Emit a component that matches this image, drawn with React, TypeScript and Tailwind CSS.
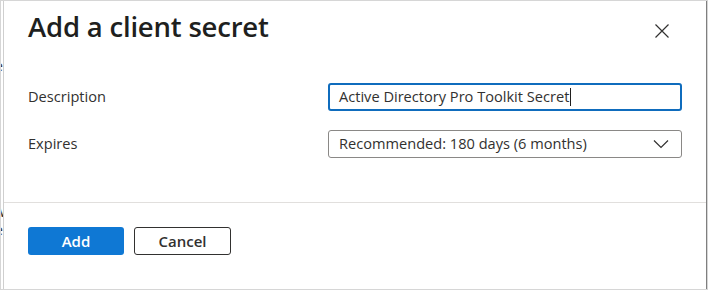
import React from "react";

export default function App() {
  return (
    <div
      className="w-[708px] h-[290px] border border-[#d6d6d6] flex bg-white overflow-hidden"
      style={{ fontFamily: '"Open Sans", "Noto Sans", sans-serif' }}
    >
      <div className="w-[2px] relative overflow-hidden bg-white text-[#323130] text-[14px]">
        <span className="absolute left-[-6px] top-[54px]">e</span>
        <span className="absolute left-[-8px] top-[200px]">W</span>
        <span className="absolute left-[-6px] top-[218px]">e</span>
      </div>
      <div className="flex-1 flex flex-col border-l border-[#cfcfcf] border-r border-r-[#7f7f7f]">
        <div className="flex items-start justify-between pl-[24px] pr-[36px] pt-[6px]">
          <h1 className="text-[27.5px] font-semibold text-[#201f1e] leading-[40px] tracking-[-0.2px]">
            Add a client secret
          </h1>
          <button className="mt-[16px] text-[#323130]" aria-label="Close">
            <svg width="16" height="16" viewBox="0 0 16 16" fill="none" stroke="#323130" strokeWidth="1.2">
              <path d="M1.5 1.5 L14.5 14.5 M14.5 1.5 L1.5 14.5" />
            </svg>
          </button>
        </div>
        <div className="pl-[24px] pr-[24px] mt-[36px] flex flex-col gap-[19px] text-[14.6px] text-[#323130]">
          <div className="flex items-center">
            <label className="w-[300px]">Description</label>
            <div className="w-[354px] h-[28px] border-2 border-[#0f6cbd] rounded-[3px] flex items-center pl-[9px]">
              <span>Active Directory Pro Toolkit Secret</span>
              <span className="w-px h-[18px] bg-[#201f1e] ml-[1px]" />
            </div>
          </div>
          <div className="flex items-center">
            <label className="w-[300px]">Expires</label>
            <div className="w-[354px] h-[28px] border border-[#8a8886] rounded-[3px] flex items-center justify-between pl-[10px] pr-[12px]">
              <span>Recommended: 180 days (6 months)</span>
              <svg width="16" height="10" viewBox="0 0 16 10" fill="none" stroke="#323130" strokeWidth="1.2">
                <path d="M1 1.5 L8 8.5 L15 1.5" />
              </svg>
            </div>
          </div>
        </div>
        <div className="mt-[44px] border-t border-[#e1dfdd]" />
        <div className="pl-[24px] pt-[24px] flex gap-[10px]">
          <button className="w-[96px] h-[28px] bg-[#0f78d4] rounded-[3px] text-white text-[15px] font-semibold">
            Add
          </button>
          <button className="w-[97px] h-[28px] border border-[#323130] rounded-[3px] text-[#323130] text-[15px] font-semibold">
            Cancel
          </button>
        </div>
      </div>
    </div>
  );
}
